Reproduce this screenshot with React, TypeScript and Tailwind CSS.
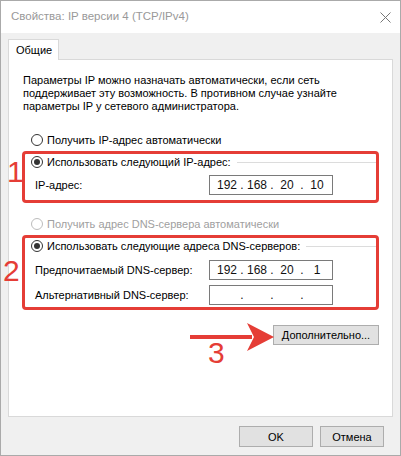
import React from "react";

const font = { fontFamily: '"Liberation Sans", Arial, sans-serif' };

function Radio({ checked = false, disabled = false }: { checked?: boolean; disabled?: boolean }) {
  return (
    <span
      className={
        "w-[12px] h-[12px] rounded-full border bg-white flex items-center justify-center shrink-0 " +
        (disabled ? "border-[#bcbcbc]" : "border-[#333333]")
      }
    >
      {checked && <span className="w-[6px] h-[6px] rounded-full bg-[#333333]" />}
    </span>
  );
}

function IpBox({ values }: { values: string[] }) {
  return (
    <div className="w-[124px] h-[20px] border border-[#7a7a7a] bg-white flex items-center pl-[4px] text-[12px] text-[#111]">
      {values.map((v, i) => (
        <React.Fragment key={i}>
          <span className="w-[26px] text-center leading-[14px]">{v}</span>
          {i < 3 && <span className="w-[4px] text-center leading-[14px]">.</span>}
        </React.Fragment>
      ))}
    </div>
  );
}

export default function App() {
  return (
    <div
      style={font}
      className="relative w-[401px] h-[456px] border border-[#aaaaaa] bg-[#f0f0f0] flex flex-col text-[11px] text-black overflow-hidden"
    >
      {/* Title bar */}
      <div className="h-[32px] bg-white flex items-center pl-[10px] pr-[8px] shrink-0">
        <span className="text-[11.5px] text-[#999999] flex-1">Свойства: IP версии 4 (TCP/IPv4)</span>
        <svg width="11" height="11" viewBox="0 0 11 11" className="mr-[1px]">
          <path d="M0.5 0.5 L10.5 10.5 M10.5 0.5 L0.5 10.5" stroke="#777" strokeWidth="1" />
        </svg>
      </div>

      {/* Body */}
      <div className="flex flex-col pl-[7px] pt-[6px]">
        {/* Tab */}
        <div className="w-[51px] h-[21px] bg-white border border-[#d9d9d9] border-b-0 flex items-center pl-[7px] relative z-10 -mb-px">
          <span className="leading-[14px]">Общие</span>
        </div>

        {/* Panel */}
        <div className="w-[385px] h-[358px] bg-white border border-[#d9d9d9] flex flex-col pl-[14px] pt-[14px]">
          <p className="leading-[13px] w-[330px]">
            Параметры IP можно назначать автоматически, если сеть поддерживает эту возможность. В противном случае узнайте параметры IP у сетевого администратора.
          </p>

          <div className="flex items-center h-[14px] mt-[20px] pl-[8px] gap-[4px]">
            <Radio />
            <span className="leading-[14px]">Получить IP-адрес автоматически</span>
          </div>

          {/* Red box 1 */}
          <div className="w-[357px] -ml-px mt-[4px] border-[3px] border-[#e53d36] rounded-[4px] flex flex-col pl-[6px] pt-[1px] pb-[5px]">
            <div className="flex items-center h-[14px] gap-[4px]">
              <Radio checked />
              <span className="leading-[14px]">Использовать следующий IP-адрес:</span>
              <span className="flex-1 h-px bg-[#dcdcdc] ml-[2px]" />
            </div>
            <div className="flex items-center mt-[6px] pl-[4px]">
              <span className="w-[174px] leading-[14px]">IP-адрес:</span>
              <IpBox values={["192", "168", "20", "10"]} />
            </div>
          </div>

          <div className="flex items-center h-[14px] mt-[14px] pl-[8px] gap-[4px]">
            <Radio disabled />
            <span className="leading-[14px] text-[#a0a0a0]">Получить адрес DNS-сервера автоматически</span>
          </div>

          {/* Red box 2 */}
          <div className="w-[357px] -ml-px mt-[4px] border-[3px] border-[#e53d36] rounded-[4px] flex flex-col pl-[6px] pt-[1px] pb-[2px]">
            <div className="flex items-center h-[14px] gap-[4px]">
              <Radio checked />
              <span className="leading-[14px]">Использовать следующие адреса DNS-серверов:</span>
              <span className="flex-1 h-px bg-[#dcdcdc] ml-[2px]" />
            </div>
            <div className="flex items-center mt-[7px] pl-[4px]">
              <span className="w-[174px] leading-[14px]">Предпочитаемый DNS-сервер:</span>
              <IpBox values={["192", "168", "20", "1"]} />
            </div>
            <div className="flex items-center mt-[5px] pl-[4px]">
              <span className="w-[174px] leading-[14px]">Альтернативный DNS-сервер:</span>
              <IpBox values={["", "", "", ""]} />
            </div>
          </div>

          <div className="w-[357px] -ml-px flex justify-end mt-[15px]">
            <button className="w-[106px] h-[20px] bg-[#e1e1e1] border border-[#adadad] flex items-center justify-center leading-[14px]">
              Дополнительно...
            </button>
          </div>
        </div>

        {/* Bottom buttons */}
        <div className="w-[385px] flex justify-end gap-[7px] mt-[9px] pr-[9px]">
          <button className="w-[74px] h-[21px] bg-[#e1e1e1] border border-[#adadad] flex items-center justify-center leading-[14px]">
            OK
          </button>
          <button className="w-[64px] h-[21px] bg-[#e1e1e1] border border-[#adadad] flex items-center justify-center leading-[14px]">
            Отмена
          </button>
        </div>
      </div>

      {/* Annotations */}
      <span className="absolute left-[6px] top-[156px] text-[30px] leading-[30px] text-[#e53d36]">1</span>
      <span className="absolute left-[2px] top-[255px] text-[30px] leading-[30px] text-[#e53d36]">2</span>
      <span className="absolute left-[207px] top-[337px] text-[30px] leading-[30px] text-[#e53d36]">3</span>
      <svg className="absolute left-0 top-0 pointer-events-none" width="401" height="456">
        <rect x="189" y="334" width="62" height="4" fill="#e53d36" />
        <polygon points="246,322 273,336 246,350 253,336" fill="#e53d36" />
      </svg>
    </div>
  );
}
